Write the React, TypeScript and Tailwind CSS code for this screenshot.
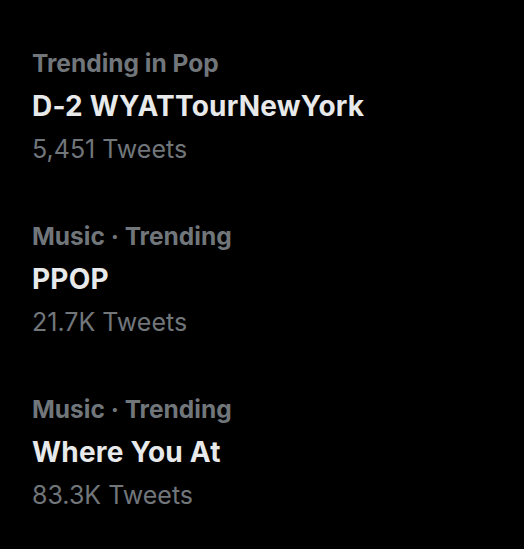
const trends = [
  { category: "Trending in Pop", title: "D-2 WYATTourNewYork", count: "5,451 Tweets" },
  { category: "Music · Trending", title: "PPOP", count: "21.7K Tweets" },
  { category: "Music · Trending", title: "Where You At", count: "83.3K Tweets" },
];

export default function App() {
  return (
    <div className="min-h-screen w-full bg-black pt-[42px] pl-8 font-['Inter',sans-serif]">
      <div className="flex flex-col gap-[44px]">
        {trends.map((t) => (
          <div key={t.title} className="flex flex-col leading-[43px]">
            <span className="text-[24.5px] font-bold text-[#71767b]">{t.category}</span>
            <span className="text-[28px] font-bold tracking-[0.2px] text-[#e7e9ea]">{t.title}</span>
            <span className="text-[25px] text-[#71767b]">{t.count}</span>
          </div>
        ))}
      </div>
    </div>
  );
}
